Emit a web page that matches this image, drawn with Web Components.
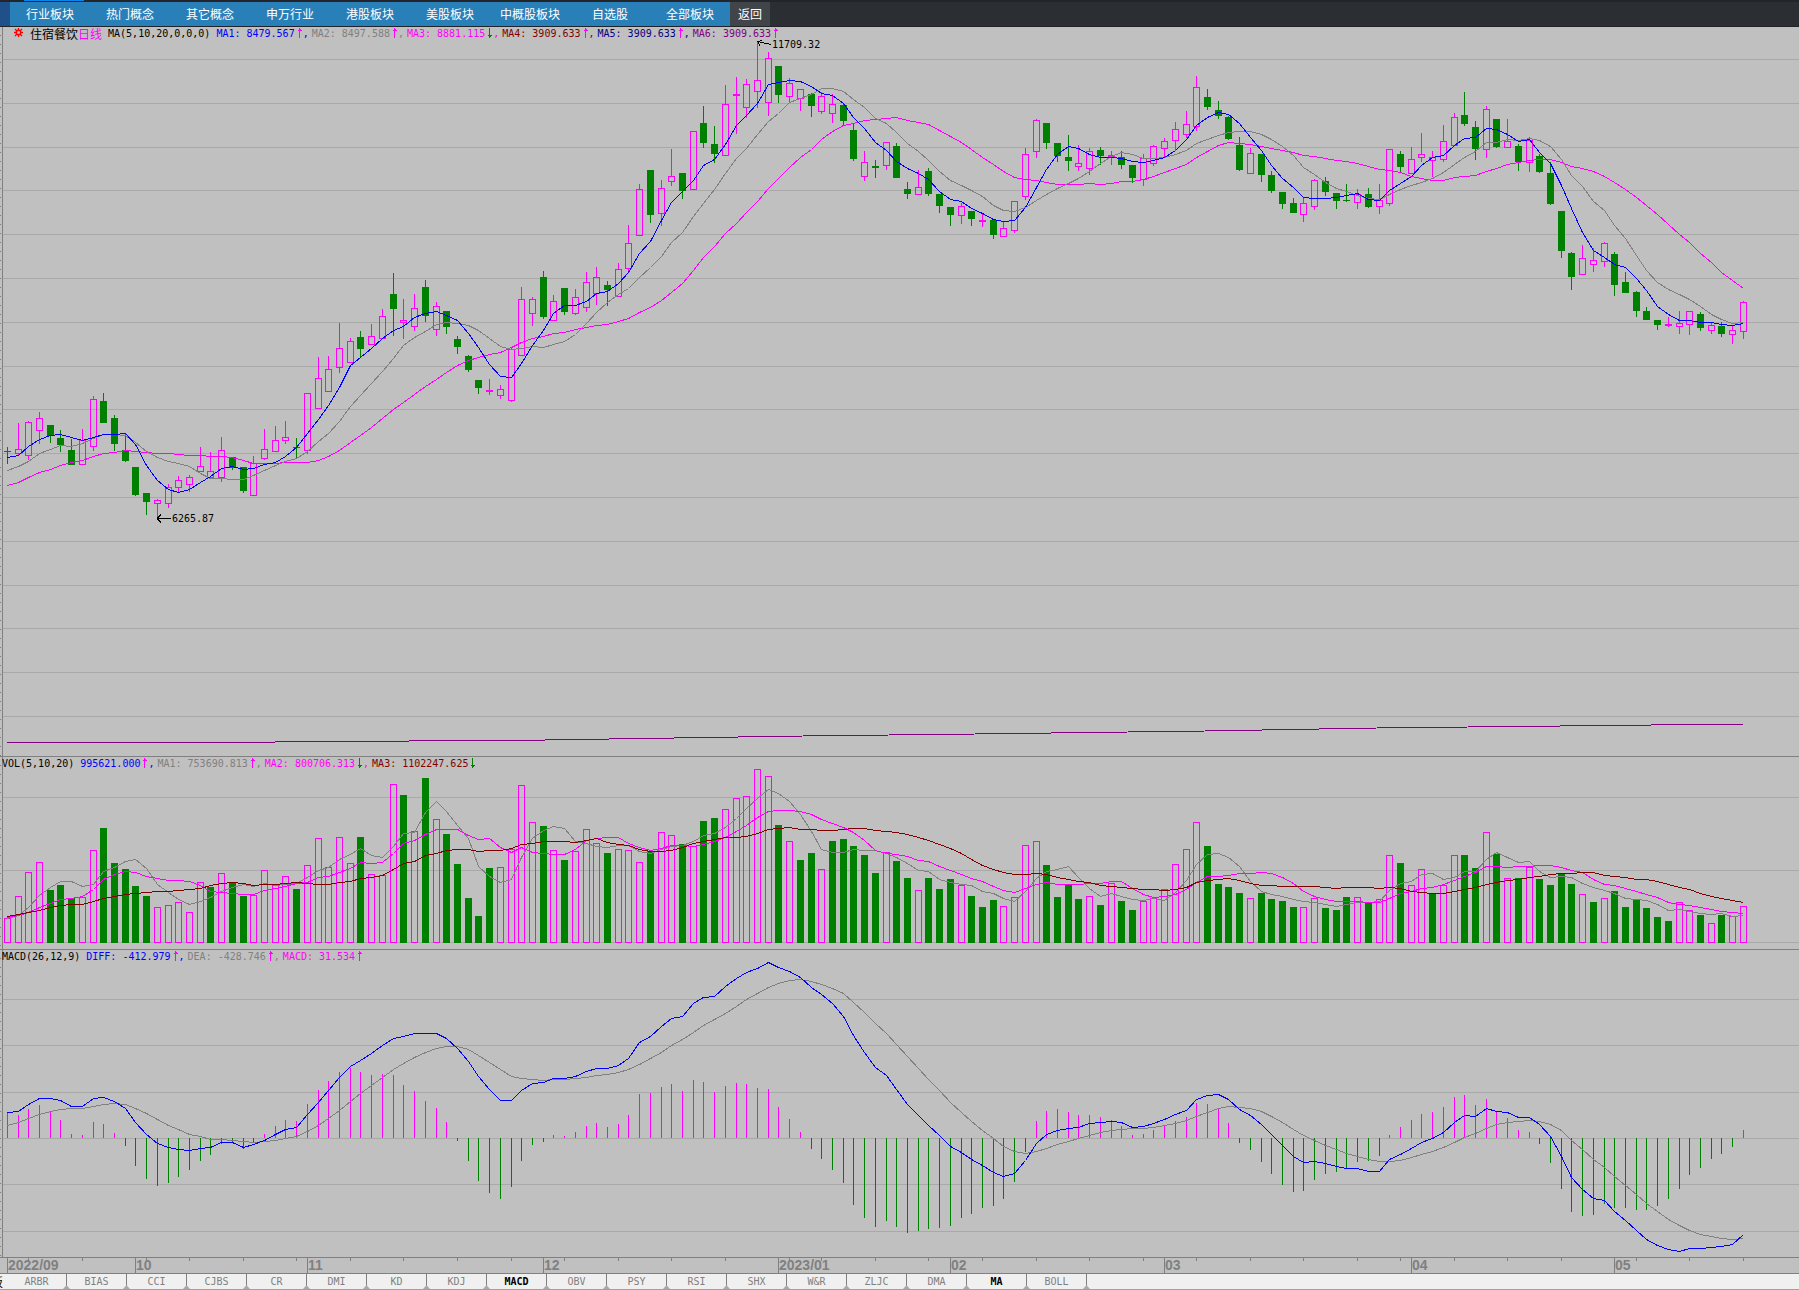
<!DOCTYPE html>
<html lang="zh-CN">
<head>
<meta charset="utf-8">
<title>住宿餐饮 日线</title>
<style>
  body {
    margin: 0;
    background: #c0c0c0;
    font-family: "DejaVu Sans Mono", "Noto Sans CJK SC", monospace;
    font-size: 10px;
  }
</style>
</head>
<body>
<stock-app></stock-app>

<script>
// candles: direction, high, body top, body bottom, low
const CANDLES = `
d447,451,452,464 u423,449,453,455 u421,422,455,460 u412,418,430,444 d425,425,436,443
d430,438,445,452 d439,450,465,465 u429,440,464,465 u396,399,446,451 d393,401,423,423
d415,418,444,451 d434,450,461,462 d467,467,495,496 d493,493,502,515 u499,500,503,518
u484,487,503,508 u476,480,487,492 u475,477,484,492 u447,466,471,472 u452,471,477,479
u437,450,477,482 d457,457,468,470 d467,467,491,493 u456,463,495,496 u429,449,458,460
u426,440,451,452 u421,437,440,444 d438,447,448,458 u393,393,450,454 u357,378,408,409
u356,369,391,392 u323,348,367,373 u338,341,362,363 d331,337,349,357 u324,336,344,345
u309,316,338,338 d273,294,309,336 u299,320,322,339 u294,308,326,331 d280,287,316,322
u302,306,329,336 d311,311,327,334 d336,339,347,354 d355,356,370,372 d380,380,388,394
u379,390,391,395 u385,389,395,399 u348,349,400,402 u287,299,355,355 u297,299,313,326
d271,277,317,319 u295,301,320,321 d288,288,312,315 u289,297,313,315 u272,282,307,312
u267,277,293,305 d281,285,290,306 u263,269,296,297 u225,243,268,272 u184,189,235,236
d170,170,215,223 u180,188,213,226 u149,176,181,186 d173,173,191,199 u131,131,189,190
d106,123,143,148 d126,144,154,163 u85,104,155,156 u77,94,95,134 u79,84,107,118
u41,80,91,108 u52,58,102,116 d66,66,95,103 u78,83,96,102 u89,89,98,111
d93,94,106,117 u92,96,111,114 u94,104,113,123 d104,105,121,125 d124,130,159,161
u151,162,176,181 d160,166,168,178 u142,142,165,170 d143,146,178,178 d182,189,194,199
u170,187,194,195 d168,171,194,196 d194,194,206,213 d207,207,215,226 u203,206,215,224
d211,211,219,226 u213,220,221,227 d219,220,235,239 u222,228,236,237 u201,201,230,233
u148,154,196,200 u119,120,151,158 d123,123,143,149 d143,143,156,162 d135,157,161,171
u145,163,166,171 u148,151,168,175 d147,150,156,165 u151,155,156,165 d151,157,165,169
d165,165,178,183 u154,158,179,186 u145,146,163,166 u138,141,148,157 u122,129,140,151
u111,124,134,138 u76,87,126,131 d89,97,107,110 d101,110,116,119 d116,117,139,140
d137,145,170,171 u148,153,173,174 d154,154,175,182 d171,175,191,193 d192,192,204,209
d198,203,213,213 u197,203,214,222 u179,180,206,210 d177,181,192,196 d193,193,201,209
d184,200,201,202 u189,194,202,209 d188,194,207,208 u184,200,206,214 u149,149,203,206
d151,154,167,172 u147,159,173,174 u133,154,157,162 u151,157,160,177 u125,141,159,162
u113,117,145,146 d92,115,124,126 d121,127,149,160 u106,109,149,158 d119,119,147,148
u119,141,147,148 d144,146,162,171 u137,140,162,172 d154,156,172,173 d162,173,204,205
d211,211,251,258 d252,253,277,290 u245,258,274,275 u248,260,264,272 u242,243,261,267
d252,254,285,296 d272,282,293,293 d291,292,311,317 d307,311,320,320 d320,320,325,330
u317,324,325,327 u311,323,326,334 u311,311,324,335 d312,314,328,331 u323,325,330,334
d322,326,334,337 u326,330,334,344 u301,302,331,339`.trim().split(/\s+/).map(row => {
  const [high, top, bottom, low] = row.slice(1).split(',').map(Number);
  const up = row[0] === 'u';
  return { up, high, top, bottom, low, close: up ? top : bottom };
});

// volume bar tops, in thirds of a pixel below the panel origin; g marks a falling day
const VOLUMES = `
505 439 367 337 g420 g405 g446 442 301 g234 g339 g357 g408 g438 472 466 457 487 397 g411
370 g399 g438 435 361 405 379 g417 346 265 352 262 340 g261 373 376 103 g135 244 g84
208 g252 g342 g444 g498 g354 352 298 106 217 g228 301 g330 303 238 280 g309 298 301 337
g303 247 256 g282 290 g213 g204 178 145 139 58 79 g225 274 g330 g309 358 g273 g267 g288
g315 g369 307 g333 g384 421 g384 g417 g387 406 g438 g471 g450 469 442 286 274 g345 g441 g405
g447 439 g465 400 g453 g480 454 445 418 343 298 217 g288 g402 g411 g429 445 g429 g447 g453
g471 472 445 g474 g480 g441 442 g456 448 316 g339 406 358 g430 406 316 g315 g354 247 g312
385 g384 351 g387 g405 g373 g402 433 g456 445 g423 g471 g451 g474 g501 g513 457 481 g495 520
g495 500 469`.trim().split(/\s+/).map(v => ({
  down: v[0] === 'g',
  top: 750 + Number(v.replace('g', '')) / 3
}));

const UP = '#ff00ff';
const DOWN = '#008000';
const GRID = '#a9a9a9';

const barX = i => Math.floor(7.36 + i * 10.716);

// moving average; head holds the values that need older history
function average(values, n, head) {
  return values.map((v, i) => {
    if (i < n - 1) return head[i];
    let sum = 0;
    for (let k = i - n + 1; k <= i; k++) sum += values[k];
    return sum / n;
  });
}

function polyline(values, color) {
  const points = values.map((v, i) => `${barX(i) + 0.5},${(Math.floor(v) + 0.5)}`).join(' ');
  return `<polyline points="${points}" fill="none" stroke="${color}"/>`;
}

function gridLines(ys) {
  return ys.map(y => `<rect x="3" y="${Math.round(y)}" width="1796" height="1" fill="${GRID}"/>`).join('');
}

function drawPrice() {
  const grid = [];
  for (let k = 0; k < 16; k++) grid.push(59 + k * 43.8);
  const closes = CANDLES.map(c => c.close);
  let out = gridLines(grid);
  CANDLES.forEach((c, i) => {
    const x = barX(i);
    if (c.up) {
      out += `<path d="M${x + 0.5} ${c.high}V${c.top}M${x + 0.5} ${c.bottom}V${c.low}" stroke="${UP}"/>`;
      out += `<rect x="${x - 2.5}" y="${c.top + 0.5}" width="6" height="${c.bottom - c.top}" fill="none" stroke="${UP}"/>`;
    } else {
      out += `<path d="M${x + 0.5} ${c.high}V${c.low}" stroke="${DOWN}"/>`;
      out += `<rect x="${x - 3}" y="${c.top}" width="7" height="${c.bottom - c.top}" fill="${DOWN}"/>`;
    }
  });
  out += polyline(average(closes, 20, [485, 482, 477, 472, 469, 465, 462, 460, 456, 453, 452, 450, 451, 452, 453, 453, 454, 455, 455]), UP);
  out += polyline(average(closes, 10, [470, 466, 461, 453, 449, 445, 446, 443, 438]), '#808080');
  out += polyline(average(closes, 5, [457, 455, 446, 439]), '#0000ff');
  out += `<polyline points="7,743 275,742 545,740 803,736 975,734 1205,731 1377,728 1743,724" fill="none" stroke="#800080"/>`;
  // extreme price marks
  out += `<path d="M757.5 41.5L771 44.5M757.5 41.5L762 40.5M757.5 41.5L760 45.5" fill="none" stroke="#000"/>
    <text x="772" y="48">11709.32</text>
    <path d="M157 518.5H171M157 518.5L161 514.5M157 518.5L161 522.5" fill="none" stroke="#000"/>
    <text x="172" y="522">6265.87</text>`;
  return out;
}

function drawVolume() {
  const tops = VOLUMES.map(v => v.top);
  let out = gridLines([797, 870, 942]);
  VOLUMES.forEach((v, i) => {
    const x = barX(i);
    const y = Math.floor(v.top);
    out += v.down
      ? `<rect x="${x - 3}" y="${y}" width="7" height="${943 - y}" fill="${DOWN}"/>`
      : `<rect x="${x - 2.5}" y="${y + 0.5}" width="6" height="${942 - y}" fill="none" stroke="${UP}"/>`;
  });
  out += polyline(average(tops, 5, [918, 915, 907, 895]), '#808080');
  out += polyline(average(tops, 10, [917, 915, 912, 907, 903, 899, 898, 896, 889]), UP);
  out += polyline(average(tops, 20, [916, 914, 912, 910, 907, 905, 904, 904, 901, 898, 896, 894, 893, 892, 891, 891, 890, 889, 888]), '#800000');
  return out;
}

function drawMacd() {
  const zero = 1138;
  let fast = 467, slow = 476.8, dea = 13.7;
  const difs = [], deas = [];
  CANDLES.forEach((c, i) => {
    if (i > 0) {
      fast += (c.close - fast) * 2 / 13;
      slow += (c.close - slow) * 2 / 27;
    }
    const dif = (slow - fast) * 2.66;
    if (i > 0) dea += (dif - dea) * 0.2;
    difs.push(dif);
    deas.push(dea);
  });
  let out = gridLines([999, 1045, 1092, 1138, 1184, 1231]);
  difs.forEach((dif, i) => {
    const h = Math.round(2 * (dif - deas[i]));
    out += h >= 0
      ? `<rect x="${barX(i)}" y="${zero - h}" width="1" height="${h}" fill="${UP}"/>`
      : `<rect x="${barX(i)}" y="${zero}" width="1" height="${-h}" fill="${DOWN}"/>`;
  });
  out += polyline(deas.map(v => zero + 1 - v), '#808080');
  out += polyline(difs.map(v => zero + 1 - v), '#0000ff');
  return out;
}

class SectorNav extends HTMLElement {
  constructor() {
    super();
    this.attachShadow({ mode: 'open' });
  }

  connectedCallback() {
    const items = ['行业板块', '热门概念', '其它概念', '申万行业', '港股板块', '美股板块', '中概股板块', '自选股', '全部板块'];
    this.shadowRoot.innerHTML = `
      <style>
        :host {
          display: block;
          background: #2b2e33;
          font: 12px/24px "Noto Sans CJK SC", sans-serif;
          border-bottom: 1px solid #20242a;
        }
        .strip {
          height: 2px;
          padding-left: 24px;
          background: #22262c;
        }
        .strip i {
          display: block;
          width: 60px;
          height: 1px;
          background: #0a84e8;
        }
        nav {
          display: flex;
          height: 24px;
        }
        nav::before {
          content: "";
          width: 10px;
          background: #20508a;
        }
        a {
          width: 80px;
          text-align: center;
          color: #fff;
          background: #2980b9;
          text-decoration: none;
        }
        a.back {
          width: 40px;
          background: #414449;
        }
      </style>
      <div class="strip"><i></i></div>
      <nav>
        ${items.map(t => `<a href="#">${t}</a>`).join('')}<a class="back" href="#">返回</a>
      </nav>
    `;
  }
}

class LegendItem extends HTMLElement {
  constructor() {
    super();
    this.attachShadow({ mode: 'open' });
  }

  connectedCallback() {
    const trend = this.getAttribute('trend');
    const arrow = trend === 'down'
      ? `<svg viewBox="0 0 8 12"><path d="M4.5 1V11M2.5 8.5H6.5M3.5 9.5H5.5" stroke="${DOWN}"/></svg>`
      : `<svg viewBox="0 0 8 12"><path d="M4.5 1V11M2.5 3.5H6.5M3.5 2.5H5.5" stroke="${UP}"/></svg>`;
    this.shadowRoot.innerHTML = `
      <style>
        :host { display: flex; white-space: pre; }
        svg { width: 8px; height: 12px; shape-rendering: crispEdges; }
        .comma { width: 9px; }
      </style>
      <slot></slot>${arrow}<span class="comma">${this.hasAttribute('last') ? '' : ','}</span>
    `;
  }
}

class ChartPanel extends HTMLElement {
  constructor() {
    super();
    this.attachShadow({ mode: 'open' });
  }

  connectedCallback() {
    const top = Number(this.getAttribute('top'));
    const height = Number(this.getAttribute('height'));
    const draw = { price: drawPrice, volume: drawVolume, macd: drawMacd }[this.getAttribute('type')];
    this.shadowRoot.innerHTML = `
      <style>
        :host {
          display: flex;
          border-bottom: 1px solid #808080;
        }
        .axis {
          flex: none;
          width: 2px;
          border-right: 1px solid #808080;
          background: linear-gradient(90deg, transparent 1px, #c0c0c0 1px),
            repeating-linear-gradient(#c0c0c0 0 8px, #808080 8px 9px);
        }
        .plot { flex: 1; min-width: 0; }
        .legend {
          display: flex;
          height: 14px;
          line-height: 13px;
        }
        svg {
          display: block;
          width: 100%;
          height: ${height}px;
          overflow: visible;
          shape-rendering: crispEdges;
        }
        text { font: 10px "DejaVu Sans Mono", monospace; }
      </style>
      <div class="axis"></div>
      <div class="plot">
        <div class="legend"><slot></slot></div>
        <svg viewBox="3 ${top} 1796 ${height}" preserveAspectRatio="none">${draw()}</svg>
      </div>
    `;
  }
}

class DateAxis extends HTMLElement {
  constructor() {
    super();
    this.attachShadow({ mode: 'open' });
  }

  connectedCallback() {
    const months = [[0, '2022/09'], [12, '10'], [28, '11'], [50, '12'], [72, '2023/01'], [88, '02'], [108, '03'], [131, '04'], [150, '05']];
    const weeks = [2, 7, 13, 17, 22, 27, 32, 37, 42, 47, 52, 57, 62, 67, 73, 76, 81, 86, 91, 96, 101, 106, 111, 116, 121, 126, 130, 135, 140, 145, 152, 157, 162];
    this.shadowRoot.innerHTML = `
      <style>
        :host { display: block; }
        svg { display: block; width: 100%; height: 15px; shape-rendering: crispEdges; }
        text { font: bold 14px "Liberation Sans", Arial, sans-serif; fill: #808080; }
      </style>
      <svg viewBox="0 0 1799 15" preserveAspectRatio="none">
        <path d="${weeks.map(i => `M${barX(i) + 0.5} 0V3`).join('')}${months.map(m => `M${barX(m[0]) + 0.5} 0V15`).join('')}" stroke="#808080"/>
        ${months.map(m => `<text x="${barX(m[0]) + 1}" y="12">${m[1]}</text>`).join('')}
      </svg>
    `;
  }
}

class IndicatorTabs extends HTMLElement {
  constructor() {
    super();
    this.attachShadow({ mode: 'open' });
  }

  connectedCallback() {
    const tabs = ['ARBR', 'BIAS', 'CCI', 'CJBS', 'CR', 'DMI', 'KD', 'KDJ', 'MACD', 'OBV', 'PSY', 'RSI', 'SHX', 'W&amp;R', 'ZLJC', 'DMA', 'MA', 'BOLL'];
    const active = ['MACD', 'MA'];
    this.shadowRoot.innerHTML = `
      <style>
        :host {
          display: flex;
          height: 15px;
          background: #f0f0f0;
          border-top: 1px solid #808080;
          border-bottom: 1px solid #a0a0a0;
        }
        .more {
          display: flex;
          justify-content: flex-end;
          width: 3px;
          margin-right: 4px;
          overflow: hidden;
          font: 12px/15px "Noto Sans CJK SC", sans-serif;
        }
        button {
          position: relative;
          width: 60px;
          padding: 0;
          border: 0;
          border-right: 1px solid #808080;
          background: none;
          color: #808080;
          font: 10px/15px "DejaVu Sans Mono", monospace;
        }
        button.active { color: #000; font-weight: bold; }
        button::after {
          content: "";
          position: absolute;
          right: -4px;
          bottom: 0;
          width: 7px;
          height: 4px;
          background: #a9a9a9;
          clip-path: polygon(50% 0, 100% 100%, 0 100%);
        }
      </style>
      <span class="more">板</span>
      ${tabs.map(t => `<button type="button" class="${active.includes(t) ? 'active' : ''}">${t}</button>`).join('')}
    `;
  }
}

class StockApp extends HTMLElement {
  constructor() {
    super();
    this.attachShadow({ mode: 'open' });
  }

  connectedCallback() {
    this.shadowRoot.innerHTML = `
      <style>
        :host { display: block; color: #000; }
        .name {
          display: flex;
          white-space: pre;
          margin-right: 6px;
          font-size: 12px;
          font-family: "Noto Sans CJK SC", sans-serif;
        }
        .name b { font-weight: normal; color: #f0f; }
        .sun { width: 9px; height: 9px; margin: 1px 7px 0 11px; }
        .title { margin-right: 6px; }
        .flush { margin-left: -1px; }
        .blue { color: #0000ff; }
        .gray { color: #808080; }
        .pink { color: #ff00ff; }
        .maroon { color: #800000; }
        .navy { color: #000080; }
        .purple { color: #800080; }
      </style>
      <sector-nav></sector-nav>
      <chart-panel type="price" top="41" height="715">
        <svg class="sun" viewBox="0 0 9 9"><path d="M2.5 2.5H6.5V6.5H2.5ZM1 1L2 2M8 1L7 2M1 8L2 7M8 8L7 7M4.5 0V2M4.5 7V9M0 4.5H2M7 4.5H9" fill="none" stroke="#f00" stroke-width="1.4"/></svg>
        <span class="name">住宿餐饮<b>日线</b></span>
        <span class="title">MA(5,10,20,0,0,0)</span>
        <legend-item class="blue" trend="up">MA1: 8479.567</legend-item>
        <legend-item class="gray" trend="up">MA2: 8497.588</legend-item>
        <legend-item class="pink" trend="down">MA3: 8881.115</legend-item>
        <legend-item class="maroon" trend="up">MA4: 3909.633</legend-item>
        <legend-item class="navy" trend="up">MA5: 3909.633</legend-item>
        <legend-item class="purple" trend="up" last>MA6: 3909.633</legend-item>
      </chart-panel>
      <chart-panel type="volume" top="771" height="178">
        <span class="title flush">VOL(5,10,20)</span>
        <legend-item class="blue" trend="up">995621.000</legend-item>
        <legend-item class="gray" trend="up">MA1: 753690.813</legend-item>
        <legend-item class="pink" trend="down">MA2: 800706.313</legend-item>
        <legend-item class="maroon" trend="down" last>MA3: 1102247.625</legend-item>
      </chart-panel>
      <chart-panel type="macd" top="964" height="293">
        <span class="title flush">MACD(26,12,9)</span>
        <legend-item class="blue" trend="up">DIFF: -412.979</legend-item>
        <legend-item class="gray" trend="up">DEA: -428.746</legend-item>
        <legend-item class="pink" trend="up" last>MACD: 31.534</legend-item>
      </chart-panel>
      <date-axis></date-axis>
      <indicator-tabs></indicator-tabs>
    `;
  }
}

customElements.define('sector-nav', SectorNav);
customElements.define('legend-item', LegendItem);
customElements.define('chart-panel', ChartPanel);
customElements.define('date-axis', DateAxis);
customElements.define('indicator-tabs', IndicatorTabs);
customElements.define('stock-app', StockApp);
</script>
</body>
</html>
